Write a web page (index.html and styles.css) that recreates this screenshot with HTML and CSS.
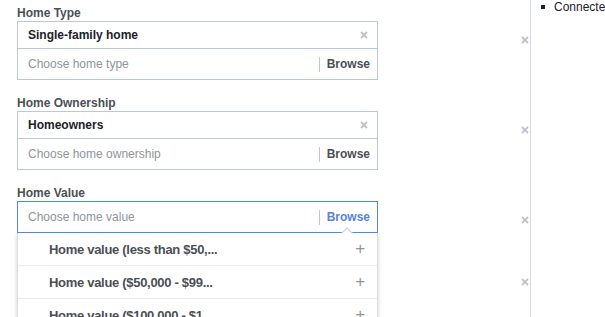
FILE: index.html
```html
<!DOCTYPE html>
<html lang="en">
<head>
    <meta charset="UTF-8">
    <title>Home targeting</title>
    <link rel="stylesheet" href="styles.css">
</head>
<body>
    <div class="page">
        <div class="main">
            <div class="field">
                <div class="field-body">
                    <div class="label">Home Type</div>
                    <div class="box">
                        <div class="row selected">
                            <span>Single-family home</span>
                            <svg class="x-icon" viewBox="0 0 8 8"><path d="M1 1L7 7M7 1L1 7"/></svg>
                        </div>
                        <div class="row input">
                            <span class="placeholder">Choose home type</span>
                            <span class="browse">Browse</span>
                        </div>
                    </div>
                </div>
                <svg class="x-icon remove" viewBox="0 0 8 8"><path d="M1 1L7 7M7 1L1 7"/></svg>
            </div>

            <div class="field">
                <div class="field-body">
                    <div class="label">Home Ownership</div>
                    <div class="box">
                        <div class="row selected">
                            <span>Homeowners</span>
                            <svg class="x-icon" viewBox="0 0 8 8"><path d="M1 1L7 7M7 1L1 7"/></svg>
                        </div>
                        <div class="row input">
                            <span class="placeholder">Choose home ownership</span>
                            <span class="browse">Browse</span>
                        </div>
                    </div>
                </div>
                <svg class="x-icon remove" viewBox="0 0 8 8"><path d="M1 1L7 7M7 1L1 7"/></svg>
            </div>

            <div class="field">
                <div class="field-body">
                    <div class="label">Home Value</div>
                    <div class="box focused">
                        <div class="row input">
                            <span class="placeholder">Choose home value</span>
                            <span class="browse active">Browse</span>
                        </div>
                        <span class="beak"></span>
                        <ul class="dropdown">
                            <li><span>Home value (less than $50,...</span><span class="add">+</span></li>
                            <li><span>Home value ($50,000 - $99...</span><span class="add">+</span></li>
                            <li><span>Home value ($100,000 - $1...</span><span class="add">+</span></li>
                        </ul>
                    </div>
                </div>
                <svg class="x-icon remove" viewBox="0 0 8 8"><path d="M1 1L7 7M7 1L1 7"/></svg>
            </div>

            <div class="field hidden-field">
                <svg class="x-icon remove" viewBox="0 0 8 8"><path d="M1 1L7 7M7 1L1 7"/></svg>
            </div>
        </div>

        <div class="side">
            <ul class="side-list">
                <li>Connected</li>
            </ul>
        </div>
    </div>
</body>
</html>
```

FILE: styles.css
```css
body {
    margin: 0;
    font-family: "Liberation Sans", Arial, sans-serif;
    font-size: 12px;
    color: #1d2129;
    background-color: white;
    overflow: hidden;
}
.page {
    display: flex;
    height: 317px;
}
.main {
    width: 513px;
    padding: 7px 0 0 17px;
    border-right: 1px solid #d3dae8;
}
.field {
    display: flex;
    justify-content: space-between;
    margin-bottom: 17px;
}
.field-body {
    width: 361px;
}
.label {
    font-weight: bold;
    color: #4b4f56;
    line-height: 13px;
    margin-bottom: 1px;
}
.box {
    position: relative;
    border: 1px solid #bdc7d8;
}
.box.focused {
    border-color: #4f86f7;
}
.row {
    display: flex;
    align-items: center;
    justify-content: space-between;
    padding: 0 9px 0 10px;
}
.row.selected {
    height: 26px;
    font-weight: bold;
    border-bottom: 1px solid #bdc7d8;
}
.row.input {
    height: 30px;
    padding-right: 7px;
}
.placeholder {
    color: #90949c;
}
.x-icon {
    width: 8px;
    height: 8px;
    fill: none;
    stroke: #bec2c9;
    stroke-width: 1.8;
}
.browse {
    font-weight: bold;
    color: #4b4f56;
    border-left: 1px solid #bdc7d8;
    padding-left: 7px;
    line-height: 15px;
}
.browse.active {
    color: #5b7fe6;
}
.beak {
    position: absolute;
    right: 26px;
    bottom: -5px;
    width: 7px;
    height: 7px;
    background-color: white;
    border-left: 1px solid #ccd0d5;
    border-top: 1px solid #ccd0d5;
    transform: rotate(45deg);
    z-index: 2;
}
.dropdown {
    position: absolute;
    top: 31px;
    left: -1px;
    right: -1px;
    margin: 0;
    padding: 0;
    list-style: none;
    background-color: white;
    border: 1px solid #dddfe2;
    border-top: none;
    box-shadow: 0 2px 4px rgba(0,0,0,0.2);
    z-index: 1;
}
.dropdown li {
    display: flex;
    align-items: center;
    justify-content: space-between;
    height: 32px;
    padding: 0 12px 0 31px;
    font-size: 13px;
    letter-spacing: -0.3px;
    font-weight: bold;
    color: #4b4f56;
    border-bottom: 1px solid #e9ebee;
}
.add {
    color: #90949c;
    font-size: 17px;
    font-weight: normal;
}
.remove {
    margin-top: 29px;
    margin-right: 1px;
}
.hidden-field {
    justify-content: flex-end;
}
.hidden-field .remove {
    margin-top: 28px;
}
.side {
    flex: 1;
    overflow: hidden;
    white-space: nowrap;
}
.side-list {
    margin: 0;
    padding: 0 0 0 10px;
    list-style: none;
    font-size: 12px;
    line-height: 14px;
}
.side-list li::before {
    content: "";
    display: inline-block;
    width: 4px;
    height: 4px;
    background-color: #1d2129;
    margin-right: 9px;
    vertical-align: 2px;
}
```
